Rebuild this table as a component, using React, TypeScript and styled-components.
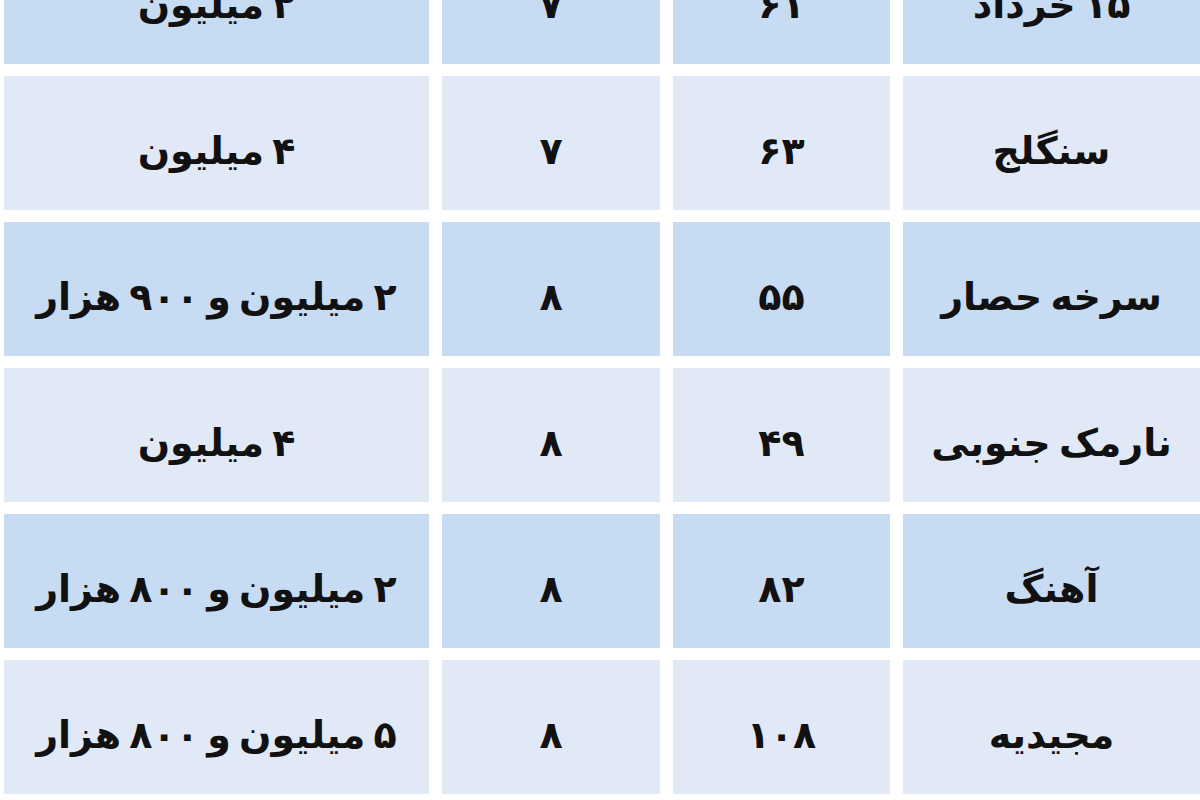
import styled, { createGlobalStyle } from "styled-components";

const GlobalStyle = createGlobalStyle`
    html, body {
        margin: 0;
        padding: 0;
        background: #ffffff;
    }
`;

const Page = styled.div`
    width: 1200px;
    height: 800px;
    overflow: hidden;
    background: #ffffff;
`;

const Table = styled.div`
    direction: rtl;
    display: grid;
    grid-template-columns: 1fr 217px 218px 425px;
    grid-auto-rows: 134px;
    column-gap: 13px;
    row-gap: 12px;
    margin: -70px 0 0 4px;
`;

const Cell = styled.div<{ $dark: boolean }>`
    display: flex;
    align-items: center;
    justify-content: center;
    padding-top: 16px;
    box-sizing: border-box;
    background: ${(props) => (props.$dark ? "#c7dbf2" : "#e1e9f6")};
    color: #111111;
    font-family: "DejaVu Sans", "Noto Sans", sans-serif;
    font-weight: 700;
    font-size: 38px;
    word-spacing: -5px;
    white-space: nowrap;
`;

const rows = [
    ["۱۵ خرداد", "۶۱", "۷", "۲ میلیون"],
    ["سنگلج", "۶۳", "۷", "۴ میلیون"],
    ["سرخه حصار", "۵۵", "۸", "۲ میلیون و ۹۰۰ هزار"],
    ["نارمک جنوبی", "۴۹", "۸", "۴ میلیون"],
    ["آهنگ", "۸۲", "۸", "۲ میلیون و ۸۰۰ هزار"],
    ["مجیدیه", "۱۰۸", "۸", "۵ میلیون و ۸۰۰ هزار"],
];

function App() {
    return (
        <>
            <GlobalStyle />
            <Page>
                <Table>
                    {rows.map((row, i) =>
                        row.map((text, j) => (
                            <Cell key={`${i}-${j}`} $dark={i % 2 === 0}>
                                {text}
                            </Cell>
                        ))
                    )}
                </Table>
            </Page>
        </>
    );
}
export default App;
